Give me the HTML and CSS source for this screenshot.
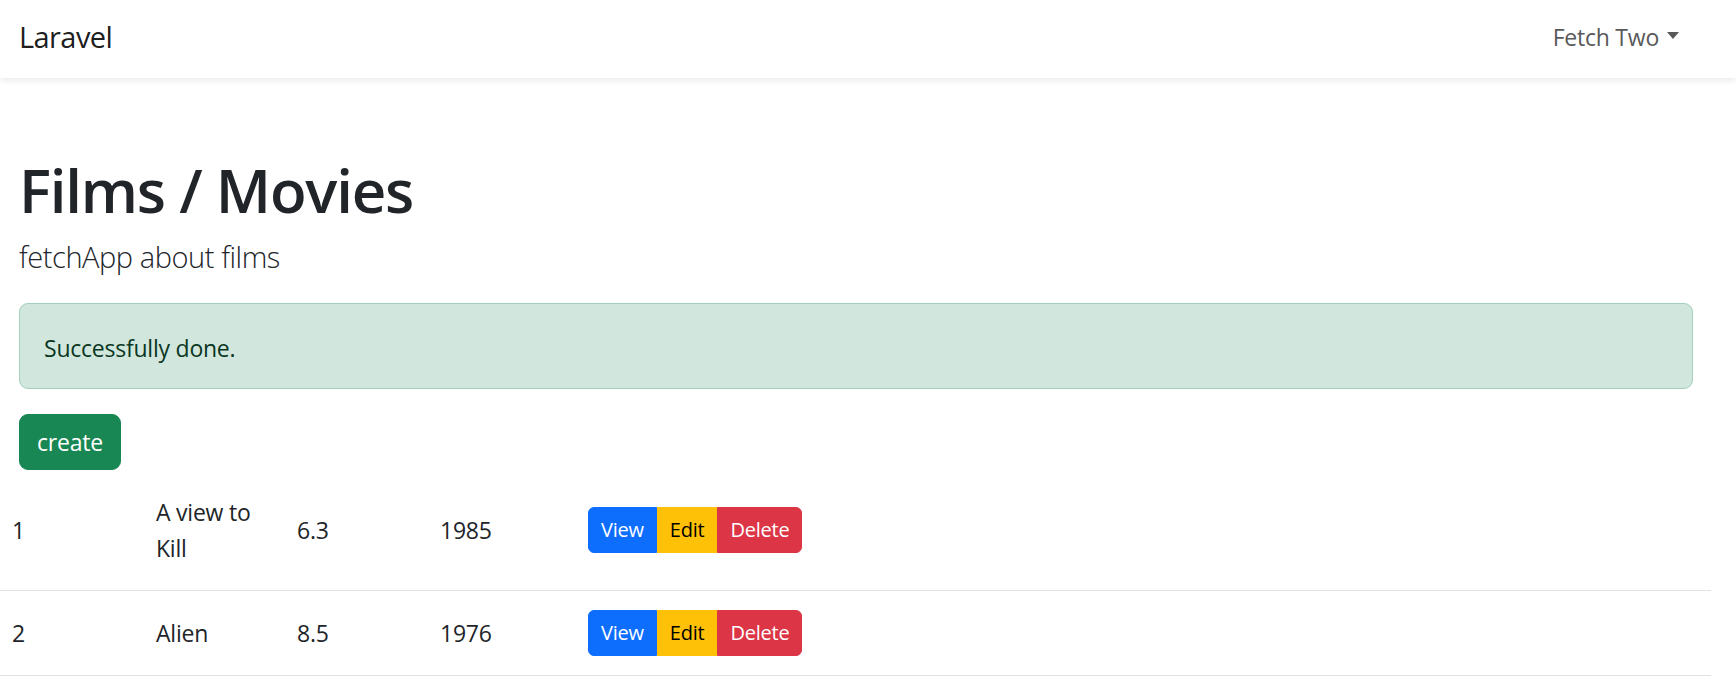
FILE: index.html
```html
<!DOCTYPE html>
<html lang="en">
<head>
<meta charset="utf-8">
<title>Laravel</title>
<link rel="stylesheet" href="styles.css">
</head>
<body>
<nav class="navbar">
  <a class="brand" href="#">Laravel</a>
  <a class="nav-link" href="#">Fetch Two<span class="caret"></span></a>
</nav>
<main class="main">
  <div class="content">
    <h1 class="title">Films / Movies</h1>
    <p class="lead">fetchApp about films</p>
    <div class="alert">Successfully done.</div>
    <a class="btn-create" href="#">create</a>
  </div>
  <table class="films">
    <colgroup>
      <col class="c-id"><col class="c-title"><col class="c-rating"><col class="c-year"><col>
    </colgroup>
    <tbody>
      <tr>
        <td>1</td>
        <td>A view to Kill</td>
        <td>6.3</td>
        <td>1985</td>
        <td class="actions">
          <div class="btn-group">
            <a class="btn btn-view" href="#">View</a><a class="btn btn-edit" href="#">Edit</a><a class="btn btn-delete" href="#">Delete</a>
          </div>
        </td>
      </tr>
      <tr>
        <td>2</td>
        <td>Alien</td>
        <td>8.5</td>
        <td>1976</td>
        <td class="actions">
          <div class="btn-group">
            <a class="btn btn-view" href="#">View</a><a class="btn btn-edit" href="#">Edit</a><a class="btn btn-delete" href="#">Delete</a>
          </div>
        </td>
      </tr>
    </tbody>
  </table>
</main>
</body>
</html>
```

FILE: styles.css
```css
* { box-sizing: border-box; }

html, body {
  margin: 0;
  background: #fff;
}

body {
  font-family: "Open Sans", "Noto Sans", sans-serif;
  font-size: 23px;
  line-height: 36px;
  color: #212529;
  letter-spacing: -0.01em;
}

a { text-decoration: none; }

.navbar {
  height: 78px;
  display: flex;
  align-items: center;
  justify-content: space-between;
  padding: 0 45px 0 19px;
  background: #fff;
  box-shadow: 0 3px 6px rgba(0, 0, 0, 0.075);
  position: relative;
}

.brand {
  font-size: 29px;
  line-height: 42px;
  padding-bottom: 4px;
  color: rgba(0, 0, 0, 0.9);
  letter-spacing: -0.02em;
}

.nav-link {
  font-size: 23px;
  line-height: 36px;
  padding: 0 12px 4px 12px;
  color: #595959;
  display: inline-flex;
  align-items: center;
}

.caret {
  display: inline-block;
  width: 0;
  height: 0;
  margin-left: 8px;
  margin-bottom: 4px;
  border-top: 7px solid #595959;
  border-left: 6px solid transparent;
  border-right: 6px solid transparent;
}

.main {
  width: 1711px;
}

.content {
  padding: 77px 18px 0 19px;
}

.title {
  margin: 0;
  font-size: 60px;
  line-height: 70px;
  font-weight: 600;
  letter-spacing: -0.02em;
}

.lead {
  margin: 11px 0 0;
  font-size: 29px;
  line-height: 42px;
  font-weight: 300;
  letter-spacing: -0.015em;
}

.alert {
  margin-top: 25px;
  height: 86px;
  padding: 26px 24px 22px;
  background: #d1e7dd;
  border: 1px solid #a3cfbb;
  border-radius: 9px;
  color: #0a3622;
}

.btn-create {
  display: inline-block;
  margin-top: 25px;
  height: 56px;
  padding: 9px 17px 9px;
  border: 1px solid #198754;
  border-radius: 9px;
  background: #198754;
  color: #fff;
  vertical-align: top;
}

.films {
  width: 1711px;
  border-collapse: collapse;
  table-layout: fixed;
}

.c-id { width: 144px; }
.c-title { width: 141px; }
.c-rating { width: 143px; }
.c-year { width: 148px; }

.films td {
  padding: 24px 12px;
  border-bottom: 1px solid #dee2e6;
  vertical-align: middle;
}

.films td.actions {
  padding: 19px 12px;
}

.btn-group {
  display: inline-flex;
  vertical-align: middle;
}

.btn {
  display: inline-block;
  height: 46px;
  padding: 6px 12px;
  font-size: 20px;
  line-height: 32px;
  border: 1px solid transparent;
}

.btn-view {
  background: #0d6efd;
  border-color: #0d6efd;
  color: #fff;
  border-radius: 6px 0 0 6px;
}

.btn-edit {
  background: #ffc107;
  border-color: #ffc107;
  color: #000;
}

.btn-delete {
  background: #dc3545;
  border-color: #dc3545;
  color: #fff;
  border-radius: 0 6px 6px 0;
}
```
